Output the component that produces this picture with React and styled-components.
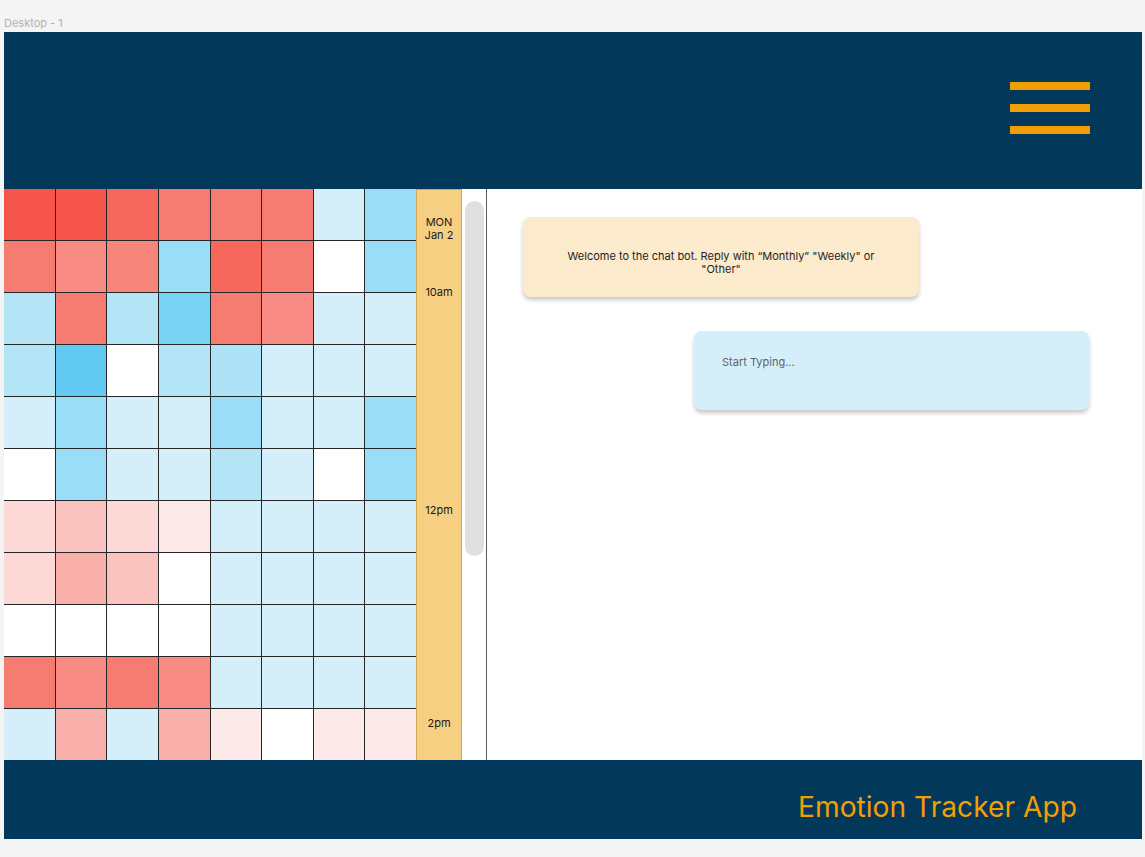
import React from "react";
import styled, { createGlobalStyle } from "styled-components";

const GlobalStyle = createGlobalStyle`
  html, body { margin: 0; padding: 0; background: #f4f4f4; }
  body { font-family: Inter, "Noto Sans", Arial, sans-serif; }
  * { box-sizing: border-box; }
`;

const Page = styled.div`
  width: 1145px;
  padding: 16px 3px 18px 4px;
`;

const FrameLabel = styled.div`
  font-size: 11px;
  line-height: 14px;
  color: #b3b3b3;
  margin-bottom: 2px;
`;

const Frame = styled.div`
  width: 1138px;
  background: #ffffff;
  display: flex;
  flex-direction: column;
`;

const Header = styled.header`
  height: 157px;
  background: #02385a;
  display: flex;
  justify-content: flex-end;
  padding: 50px 52px 0 0;
`;

const Hamburger = styled.div`
  width: 80px;
  display: flex;
  flex-direction: column;
  gap: 14px;
`;

const Bar = styled.span`
  display: block;
  height: 8px;
  background: #f29f05;
`;

const Main = styled.main`
  height: 571px;
  display: flex;
`;

const Heatmap = styled.div`
  width: 412px;
  display: grid;
  grid-template-columns: repeat(8, 1fr);
  grid-template-rows: repeat(11, 1fr);
  gap: 1px;
  background: #262626;
`;

const Cell = styled.div`
  background: ${(p) => p.$c};
`;

const TimeColumn = styled.div`
  width: 46px;
  background: #f7cf82;
  border: 1px solid #d4a851;
  border-bottom: none;
  display: flex;
  flex-direction: column;
  align-items: center;
  padding-top: 26px;
  font-size: 11px;
  line-height: 13px;
  color: #1a1a1a;
  text-align: center;
`;

const TimeLabel = styled.div`
  margin-top: ${(p) => p.$gap || 0}px;
`;

const ScrollTrack = styled.div`
  width: 25px;
  background: #ffffff;
  border-right: 1px solid #5a5a5a;
  padding: 12px 2px 0 3px;
`;

const ScrollThumb = styled.div`
  width: 19px;
  height: 355px;
  border-radius: 10px;
  background: #e0e0e0;
`;

const Chat = styled.section`
  flex: 1;
  display: flex;
  flex-direction: column;
  padding: 28px 53px 0 36px;
  background: #ffffff;
`;

const Bubble = styled.div`
  width: ${(p) => p.$w}px;
  height: ${(p) => p.$h}px;
  border-radius: 8px;
  background: ${(p) => p.$bg};
  box-shadow: 0 3px 4px rgba(0, 0, 0, 0.22);
  font-size: 11px;
  line-height: 13px;
`;

const BotBubble = styled(Bubble)`
  align-self: flex-start;
  padding: 33px 42px 0;
  text-align: center;
  color: #1f1f1f;
`;

const InputBubble = styled(Bubble)`
  align-self: flex-end;
  margin-top: 34px;
  padding: 25px 28px 0;
  color: #5f6368;
`;

const Footer = styled.footer`
  height: 79px;
  background: #02385a;
  display: flex;
  justify-content: flex-end;
  padding: 30px 65px 0 0;
`;

const Title = styled.div`
  font-size: 28.2px;
  line-height: 34px;
  color: #f29f05;
`;

const R1 = "#f5554a", R2 = "#f5685b", R3 = "#f67b70", R4 = "#f88c85", R4b = "#f8857c",
  R5 = "#f9b0ab", R6 = "#fbc3c0", R7 = "#fcd8d7", R8 = "#fde9e8", W = "#ffffff",
  B1 = "#62c9f3", B2 = "#79d3f5", B3 = "#99ddf6", B4 = "#b3e5f7", B4b = "#aee2f7", B5 = "#d4effa";

const rows = [
  [R1, R1, R2, R3, R3, R3, B5, B3],
  [R3, R4, R4b, B3, R2, R3, W, B3],
  [B4, R3, B4, B2, R3, R4, B5, B5],
  [B4, B1, W, B4, B4b, B5, B5, B5],
  [B5, B3, B5, B5, B3, B5, B5, B3],
  [W, B3, B5, B5, B4, B5, W, B3],
  [R7, R6, R7, R8, B5, B5, B5, B5],
  [R7, R5, R6, W, B5, B5, B5, B5],
  [W, W, W, W, B5, B5, B5, B5],
  [R3, R4, R3, R4, B5, B5, B5, B5],
  [B5, R5, B5, R5, R8, W, R8, R8],
];

export default function App() {
  return (
    <>
      <GlobalStyle />
      <Page>
        <FrameLabel>Desktop - 1</FrameLabel>
        <Frame>
          <Header>
            <Hamburger>
              <Bar />
              <Bar />
              <Bar />
            </Hamburger>
          </Header>
          <Main>
            <Heatmap>
              {rows.flatMap((row, r) =>
                row.map((c, i) => <Cell key={`${r}-${i}`} $c={c} />)
              )}
            </Heatmap>
            <TimeColumn>
              <TimeLabel>MON<br />Jan 2</TimeLabel>
              <TimeLabel $gap={44}>10am</TimeLabel>
              <TimeLabel $gap={205}>12pm</TimeLabel>
              <TimeLabel $gap={200}>2pm</TimeLabel>
            </TimeColumn>
            <ScrollTrack>
              <ScrollThumb />
            </ScrollTrack>
            <Chat>
              <BotBubble $w={396} $h={80} $bg="#fbeacc">
                Welcome to the chat bot. Reply with “Monthly” "Weekly" or "Other"
              </BotBubble>
              <InputBubble $w={395} $h={79} $bg="#d4effa">
                Start Typing...
              </InputBubble>
            </Chat>
          </Main>
          <Footer>
            <Title>Emotion Tracker App</Title>
          </Footer>
        </Frame>
      </Page>
    </>
  );
}
